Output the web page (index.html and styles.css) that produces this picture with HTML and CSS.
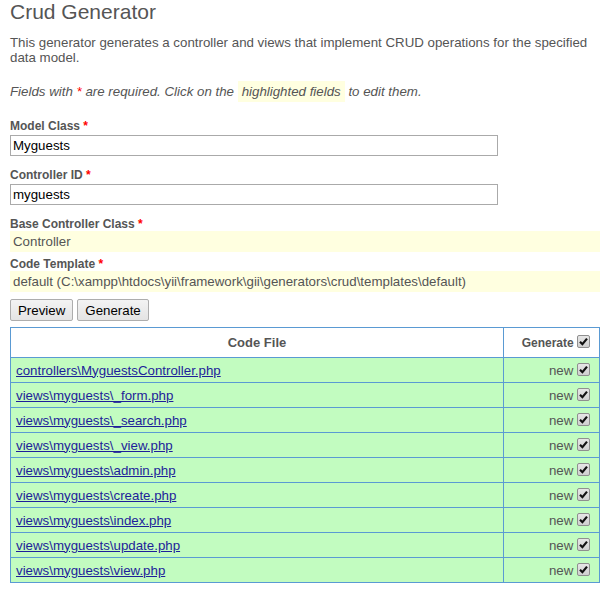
FILE: index.html
```html
<!DOCTYPE html>
<html>
<head>
<meta charset="utf-8">
<link rel="stylesheet" href="styles.css">
</head>
<body>
<div class="page">
  <h1 class="title">Crud Generator</h1>
  <p class="intro">This generator generates a controller and views that implement CRUD operations for the specified data model.</p>
  <p class="note">Fields with <span class="req">*</span> are required. Click on the <span class="hl">highlighted fields</span> to edit them.</p>

  <div class="row">
    <label class="lbl">Model Class <span class="req">*</span></label>
    <input class="txt" type="text" value="Myguests">
  </div>
  <div class="row">
    <label class="lbl">Controller ID <span class="req">*</span></label>
    <input class="txt" type="text" value="myguests">
  </div>
  <div class="row sticky">
    <label class="lbl">Base Controller Class <span class="req">*</span></label>
    <div class="value">Controller</div>
  </div>
  <div class="row sticky">
    <label class="lbl">Code Template <span class="req">*</span></label>
    <div class="value">default (C:\xampp\htdocs\yii\framework\gii\generators\crud\templates\default)</div>
  </div>

  <div class="buttons">
    <button class="btn">Preview</button>
    <button class="btn">Generate</button>
  </div>

  <table class="preview">
    <tr class="head">
      <th class="file">Code File</th>
      <th class="confirm">Generate <span class="cb"><svg viewBox="0 0 13 13" width="13" height="13"><path d="M3 6.8 L5.4 9.2 L10 3.6" fill="none" stroke="#111" stroke-width="2.2"/></svg></span></th>
    </tr>
    <tr class="new"><td class="file"><a href="#">controllers\MyguestsController.php</a></td><td class="confirm">new <span class="cb"><svg viewBox="0 0 13 13" width="13" height="13"><path d="M3 6.8 L5.4 9.2 L10 3.6" fill="none" stroke="#111" stroke-width="2.2"/></svg></span></td></tr>
    <tr class="new"><td class="file"><a href="#">views\myguests\_form.php</a></td><td class="confirm">new <span class="cb"><svg viewBox="0 0 13 13" width="13" height="13"><path d="M3 6.8 L5.4 9.2 L10 3.6" fill="none" stroke="#111" stroke-width="2.2"/></svg></span></td></tr>
    <tr class="new"><td class="file"><a href="#">views\myguests\_search.php</a></td><td class="confirm">new <span class="cb"><svg viewBox="0 0 13 13" width="13" height="13"><path d="M3 6.8 L5.4 9.2 L10 3.6" fill="none" stroke="#111" stroke-width="2.2"/></svg></span></td></tr>
    <tr class="new"><td class="file"><a href="#">views\myguests\_view.php</a></td><td class="confirm">new <span class="cb"><svg viewBox="0 0 13 13" width="13" height="13"><path d="M3 6.8 L5.4 9.2 L10 3.6" fill="none" stroke="#111" stroke-width="2.2"/></svg></span></td></tr>
    <tr class="new"><td class="file"><a href="#">views\myguests\admin.php</a></td><td class="confirm">new <span class="cb"><svg viewBox="0 0 13 13" width="13" height="13"><path d="M3 6.8 L5.4 9.2 L10 3.6" fill="none" stroke="#111" stroke-width="2.2"/></svg></span></td></tr>
    <tr class="new"><td class="file"><a href="#">views\myguests\create.php</a></td><td class="confirm">new <span class="cb"><svg viewBox="0 0 13 13" width="13" height="13"><path d="M3 6.8 L5.4 9.2 L10 3.6" fill="none" stroke="#111" stroke-width="2.2"/></svg></span></td></tr>
    <tr class="new"><td class="file"><a href="#">views\myguests\index.php</a></td><td class="confirm">new <span class="cb"><svg viewBox="0 0 13 13" width="13" height="13"><path d="M3 6.8 L5.4 9.2 L10 3.6" fill="none" stroke="#111" stroke-width="2.2"/></svg></span></td></tr>
    <tr class="new"><td class="file"><a href="#">views\myguests\update.php</a></td><td class="confirm">new <span class="cb"><svg viewBox="0 0 13 13" width="13" height="13"><path d="M3 6.8 L5.4 9.2 L10 3.6" fill="none" stroke="#111" stroke-width="2.2"/></svg></span></td></tr>
    <tr class="new"><td class="file"><a href="#">views\myguests\view.php</a></td><td class="confirm">new <span class="cb"><svg viewBox="0 0 13 13" width="13" height="13"><path d="M3 6.8 L5.4 9.2 L10 3.6" fill="none" stroke="#111" stroke-width="2.2"/></svg></span></td></tr>
  </table>
</div>
</body>
</html>
```

FILE: styles.css
```css
html, body {
  margin: 0;
  padding: 0;
  background: #fff;
}
body {
  font-family: "Liberation Sans", Arial, sans-serif;
  font-size: 13.3px;
  color: #555;
}
.page {
  padding: 0 10px;
}
.title {
  font-size: 21px;
  font-weight: normal;
  line-height: 24px;
  margin: 0 0 11px 0;
  color: #555;
}
.intro {
  margin: 0 0 17px 0;
  line-height: 15px;
}
.note {
  margin: 0 0 17px 0;
  font-style: italic;
  line-height: 20px;
}
.req {
  color: #f00;
  font-style: normal;
}
.note .req {
  font-style: italic;
}
.hl {
  background: #ffffe0;
  padding: 3px 4px;
}
.row {
  display: flex;
  flex-direction: column;
  margin-bottom: 12px;
}
.lbl {
  font-size: 12px;
  font-weight: bold;
  line-height: 14px;
  margin-bottom: 2px;
}
.txt {
  width: 488px;
  height: 21px;
  box-sizing: border-box;
  border: 1px solid #aaa;
  margin: 0;
  padding: 1px 2px;
  font-family: "Liberation Sans", Arial, sans-serif;
  font-size: 13.3px;
  color: #000;
  outline: none;
}
.sticky {
  margin-bottom: 5px;
}
.sticky .lbl {
  margin-bottom: 0;
}
.sticky .value {
  background: #ffffe0;
  height: 21px;
  line-height: 21px;
  padding: 0 3px;
  color: #555;
}
.buttons {
  display: flex;
  gap: 4px;
  margin: 7px 0 6px 0;
}
.btn {
  font-family: "Liberation Sans", Arial, sans-serif;
  font-size: 13.3px;
  color: #000;
  height: 22px;
  padding: 0 7px;
  border: 1px solid #adadad;
  border-radius: 2px;
  background: linear-gradient(#f3f3f3, #e4e4e4);
}
.preview {
  width: 590px;
  border-collapse: collapse;
  border: 1px solid #5a9ad3;
}
.preview th, .preview td {
  border: 1px solid #5a9ad3;
}
.preview th {
  height: 29px;
  font-size: 12px;
  font-weight: bold;
  color: #555;
  background: #fff;
  padding: 0 5px;
}
.preview th.file {
  text-align: center;
  font-size: 13px;
}
.preview .confirm {
  text-align: right;
  width: 81px;
  padding: 0 9px 0 5px;
}
.preview td {
  height: 24px;
  background: #c2fcc0;
  padding: 0 5px;
  font-size: 13.3px;
}
.preview td a {
  color: #1e1e9a;
}
.cb {
  display: inline-block;
  width: 13px;
  height: 13px;
  box-sizing: border-box;
  border: 1px solid #8f8f8f;
  border-radius: 2px;
  background: linear-gradient(#e6e6e6, #cfcfcf);
  vertical-align: -1px;
  position: relative;
}
.cb svg {
  position: absolute;
  left: -1px;
  top: -1px;
}
```
